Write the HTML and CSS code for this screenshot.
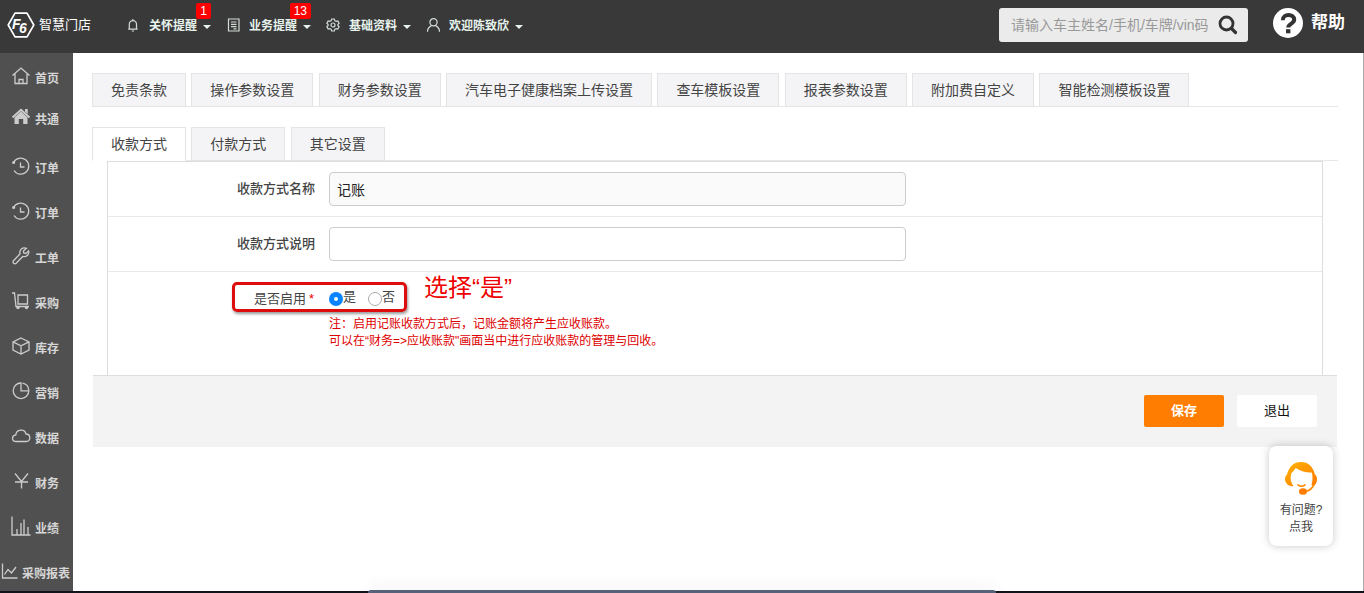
FILE: index.html
```html
<!DOCTYPE html>
<html lang="zh-CN">
<head>
<meta charset="utf-8">
<title>智慧门店</title>
<link rel="stylesheet" href="styles.css">
</head>
<body>
<header class="topbar">
  <a class="brand" href="#">
    <svg class="brand-mark" viewBox="0 0 28 26" aria-hidden="true">
      <path d="M8 1.2h12L26.8 13 20 24.8H8L1.2 13z" fill="none" stroke="#fff" stroke-width="1.7" stroke-linejoin="round"/>
      <text x="5" y="17" class="mark-letter">F</text>
      <text x="12" y="21" class="mark-letter">6</text>
    </svg>
    <span>智慧门店</span>
  </a>
  <nav class="topnav">
    <button class="topitem" type="button">
      <svg viewBox="0 0 14 14"><path d="M3.3 11.2V6.2a3.6 3.6 0 0 1 7.2 0v5M2.2 11.2h9.4M5.8 13h2.2M6.9 2.5V1"/></svg>
      <span>关怀提醒</span><i class="caret"></i><b class="badge">1</b>
    </button>
    <button class="topitem" type="button">
      <svg viewBox="0 0 14 14"><path d="M2.500 1h10.500v12h-10.500zM5 4h5.500M5 6.300h5.500M5 8.600h5.500M7.500 10.800h3"/></svg>
      <span>业务提醒</span><i class="caret"></i><b class="badge">13</b>
    </button>
    <button class="topitem" type="button">
      <svg viewBox="0 0 14 14"><path d="M5.700 1h2.600l.5 1.700 1.300.7 1.700-.4 1.300 2.200L11.900 6.500v1l1.200 1.300-1.300 2.200-1.700-.4-1.300.7-.5 1.700H5.700l-.5-1.700-1.300-.7-1.700.4L.9 8.800l1.200-1.300v-1L.9 5.200 2.200 3l1.700.4 1.300-.7z"/><circle cx="7" cy="7" r="2"/></svg>
      <span>基础资料</span><i class="caret"></i>
    </button>
    <button class="topitem" type="button">
      <svg viewBox="0 0 14 14"><circle cx="7.500" cy="4.300" r="3.600"/><path d="M1.500 13.800c0-3.200 1.700-5.200 4-6.200M13.500 13.800c0-3.200-1.700-5.200-4-6.200"/></svg>
      <span>欢迎陈致欣</span><i class="caret"></i>
    </button>
  </nav>
  <form class="search">
    <input type="text" placeholder="请输入车主姓名/手机/车牌/vin码" aria-label="搜索">
    <button type="button" aria-label="搜索">
      <svg viewBox="0 0 20 20"><circle cx="8.500" cy="8.500" r="6.500" fill="none" stroke="#333" stroke-width="2.800"/><path d="M13.500 13.500l4 4" stroke="#333" stroke-width="3.200" stroke-linecap="round"/></svg>
    </button>
  </form>
  <a class="help" href="#">
    <svg viewBox="0 0 30 30" aria-hidden="true"><circle cx="15" cy="15" r="15" fill="#fff"/><path d="M9.800 12.200c0-7 11.400-6.700 11.400-.6 0 4.400-6 4.100-6 8" fill="none" stroke="#333" stroke-width="4"/><path d="M13 21.200h4.400V25.300H13z" fill="#333"/></svg>
    <span>帮助</span>
  </a>
</header>

<div class="body">
  <nav class="sidebar">
    <a class="side compact" href="#"><svg viewBox="0 0 20 20"><path d="M1.500 9.500L10 2l8.500 7.500M4 8v9.500h12V8M8 17.500v-4h4v4"/></svg><span>首页</span></a>
    <a class="side compact last" href="#"><svg viewBox="0 0 20 20"><path class="solid" d="M10 4.500l6.500 6V17h-4.300v-5H7.800v5H3.500v-6.500z"/><path class="bold" d="M1.500 10.500L10 2.800l8.500 7.700"/><path class="solid" d="M14 2h2.700v5L14 4.700z"/></svg><span>共通</span></a>
    <a class="side" href="#"><svg viewBox="0 0 20 20"><path d="M2.600 6.500A8 8 0 1 1 3 14.500M9.500 6.500V11h4"/><circle class="solid" cx="2.600" cy="6.500" r="1.500"/></svg><span>订单</span></a>
    <a class="side" href="#"><svg viewBox="0 0 20 20"><path d="M2.600 6.500A8 8 0 1 1 3 14.500M9.500 6.500V11h4"/><circle class="solid" cx="2.600" cy="6.500" r="1.500"/></svg><span>订单</span></a>
    <a class="side" href="#"><svg viewBox="0 0 20 20"><path d="M15.500 2.300c-3.800-1.600-7.700 1.400-6.400 5.500L2.500 14.700c-1.300 2 .9 4 2.700 2.600l6.500-6.800c3.900 1 6.900-2.300 5.900-5.600l-2.700 2.600-2.200-.5-.3-2.100z"/></svg><span>工单</span></a>
    <a class="side" href="#"><svg viewBox="0 0 20 20"><path d="M1 2h2.500L5 15.500h13M7 4h9.500v9H7z"/><circle class="solid" cx="7" cy="16.500" r="1.700"/><circle class="solid" cx="15.500" cy="16.500" r="1.700"/></svg><span>采购</span></a>
    <a class="side" href="#"><svg viewBox="0 0 20 20"><path d="M10 2l8 3.800v8.400l-8 3.800-8-3.800V5.800zM2 5.800l8 4 8-4M10 9.800V18"/></svg><span>库存</span></a>
    <a class="side" href="#"><svg viewBox="0 0 20 20"><path d="M10 2a7.800 7.800 0 1 0 7.800 7.800H10zM11.500 2.200a7.800 7.800 0 0 1 6.300 7"/></svg><span>营销</span></a>
    <a class="side" href="#"><svg viewBox="0 0 20 20"><path d="M5 15.500C.5 15.500.3 9.500 4.800 9c.5-6 8.900-6.500 10.200-1 5 0 5 7.500.3 7.500z"/></svg><span>数据</span></a>
    <a class="side" href="#"><svg viewBox="0 0 20 20"><path d="M4 2.500l6.500 8 6.500-8M4 11h13M10.500 10.500V17.500"/></svg><span>财务</span></a>
    <a class="side" href="#"><svg viewBox="0 0 20 20"><path d="M1 .5v18.500h18.500M6 19v-6M10 19V7M13 19V3.500M17 19v-8"/></svg><span>业绩</span></a>
    <a class="side" href="#"><svg class="small" viewBox="0 0 17 20"><path d="M1.500 2.500V17H16.500M3.500 13.500L7 8.500l3.500 3.500L15 6"/></svg><span>采购报表</span></a>
  </nav>

  <main class="main">
    <ul class="tabs">
      <li><a href="#">免责条款</a></li>
      <li><a href="#">操作参数设置</a></li>
      <li><a href="#">财务参数设置</a></li>
      <li><a href="#">汽车电子健康档案上传设置</a></li>
      <li><a href="#">查车模板设置</a></li>
      <li><a href="#">报表参数设置</a></li>
      <li><a href="#">附加费自定义</a></li>
      <li><a href="#">智能检测模板设置</a></li>
    </ul>
    <ul class="tabs">
      <li class="active"><a href="#">收款方式</a></li>
      <li><a href="#">付款方式</a></li>
      <li><a href="#">其它设置</a></li>
    </ul>
    <form class="form">
      <div class="panel">
        <div class="row">
          <label for="name">收款方式名称</label>
          <input class="field" id="name" type="text" value="记账" readonly>
        </div>
        <div class="row">
          <label for="desc">收款方式说明</label>
          <input class="field" id="desc" type="text">
        </div>
        <div class="row tall">
          <span class="rowlabel">是否启用<em>*</em></span>
          <div class="choices">
            <label><input type="radio" name="enabled" checked><span>是</span></label>
            <label><input type="radio" name="enabled"><span>否</span></label>
          </div>
          <p class="note">注：启用记账收款方式后，记账金额将产生应收账款。<br>可以在“财务=&gt;应收账款"画面当中进行应收账款的管理与回收。</p>
          <div class="mark-box"></div>
          <div class="mark-text">选择“是”</div>
        </div>
      </div>
      <div class="actions">
        <button class="btn primary" type="button">保存</button>
        <button class="btn" type="button">退出</button>
      </div>
    </form>
  </main>
</div>

<div class="dock"><div class="dock-bar"></div></div>

<a class="chat" href="#">
  <svg viewBox="0 0 34 34" aria-hidden="true">
    <defs><linearGradient id="g" x1="0" y1="0" x2="1" y2="1"><stop offset="0" stop-color="#ffb400"/><stop offset="1" stop-color="#ff7800"/></linearGradient></defs>
    <path fill="url(#g)" d="M9.500 25C5 26 1 22.500 1 18c0-2 .8-3.500 2-4.500C5 5.500 10 1 17 1s12 4.500 14 12.500c1.200 1 2 2.500 2 4.500 0 4-1.500 6.500-4 7l-1.500-1c1.300-4 1.300-9 .3-12.500-4 .5-11-1-16-4.500C10.500 8.500 9 11 7.500 12 6 16 6.500 21.500 9.500 25z"/>
    <path d="M14 23.800c2 1.600 5 1.600 7 0M30.500 22c-1.500 5-5 8-10 8.500" fill="none" stroke="#ff8a00" stroke-width="1.700" stroke-linecap="round"/>
    <ellipse cx="19" cy="30.500" rx="4" ry="3.200" fill="#ff7d00"/>
  </svg>
  <span>有问题?</span>
  <span>点我</span>
</a>
</body>
</html>
```
FILE: styles.css
```css
* { box-sizing: border-box; }
body {
  margin: 0;
  min-height: 100vh;
  display: flex;
  flex-direction: column;
  position: relative;
  font-family: "Liberation Sans", "Noto Sans CJK SC", sans-serif;
  font-size: 12px;
  line-height: 18px;
  color: #444;
  background: #fff;
}
a { color: inherit; text-decoration: none; }
button, input { font: inherit; color: inherit; }
button { border: 0; background: none; padding: 0; }

.topbar {
  display: flex;
  align-items: center;
  height: 53px;
  padding: 0 19px 4px 7px;
  background: #393939;
  color: #fff;
}
.brand {
  display: flex;
  align-items: center;
  gap: 4px;
  width: 119px;
  font-size: 13px;
}
.brand-mark { width: 28px; height: 26px; fill: #fff; }
.mark-letter { font: italic bold 14px "Liberation Sans", sans-serif; }
.topnav { display: flex; gap: 15px; flex: 1; }
.topitem {
  position: relative;
  display: flex;
  align-items: center;
  gap: 9px;
  color: #e6f2ec;
  font-weight: 700;
}
.topitem span { padding-top: 2px; }
.topitem svg {
  width: 14px;
  height: 14px;
  fill: none;
  stroke: #d3ddd8;
  stroke-width: 1.200;
}
.caret {
  margin: 4px 0 0 -3px;
  border: 4px solid transparent;
  border-top-color: #e6f2ec;
  border-bottom: 0;
}
.badge {
  position: absolute;
  right: 0;
  top: -12px;
  padding: 0 4px;
  border-radius: 2px;
  background: #f00;
  color: #fff;
  font-weight: 400;
  line-height: 16px;
}
.search {
  display: flex;
  align-items: center;
  width: 249px;
  height: 34px;
  padding: 0 10px 0 12px;
  border-radius: 3px;
  background: #ebebeb;
}
.search input {
  flex: 1;
  min-width: 0;
  padding: 0;
  border: 0;
  outline: 0;
  background: none;
  font-size: 14px;
}
.search input::placeholder { color: #999; }
.search svg { display: block; width: 20px; height: 20px; }
.help {
  display: flex;
  align-items: center;
  gap: 8px;
  margin-left: 25px;
  padding-bottom: 3px;
  font-size: 17px;
  font-weight: 700;
}
.help svg { width: 30px; height: 30px; }

.body { display: flex; flex: 1; border-right: 1px solid #aaa; }
.sidebar {
  flex: none;
  width: 73px;
  padding-top: 4px;
  background: #505050;
  color: #d6d6d6;
  font-weight: 700;
}
.side {
  display: flex;
  align-items: center;
  gap: 4px;
  height: 45px;
  padding-left: 11px;
  white-space: nowrap;
}
.side span { padding-top: 2px; }
.side.compact { height: 41px; }
.side.last { margin-bottom: 6px; }
.side svg {
  flex: none;
  width: 20px;
  height: 20px;
  margin-bottom: 4px;
  fill: none;
  stroke: #ccc;
  stroke-width: 1.300;
}
.side .solid { fill: #ccc; stroke: none; }
.side .bold { stroke-width: 2; }
.side svg.small { width: 17px; margin-left: -10px; }
.side:last-child { height: 41px; padding-top: 4px; }

.main { flex: 1; min-width: 0; padding: 20px 25px 0 19px; }
.tabs {
  margin: 0 0 20px;
  padding: 0;
  list-style: none;
  border-bottom: 1px solid #e7e7e7;
}
.tabs li {
  display: inline-block;
  vertical-align: top;
  margin: 0 2px -1px 0;
  border: 1px solid #e4e4e4;
  background: #f4f4f7;
  font-size: 14px;
  line-height: 32px;
}
.tabs a { display: block; padding: 0 18px; }
.tabs .active { background: #fff; border-bottom-color: #fff; }
.tabs + .tabs { margin-bottom: 0; }

.panel { margin: 0 15px; border: 1px solid #ddd; border-bottom: 0; }
.row {
  position: relative;
  display: grid;
  grid-template-columns: 207px minmax(0, 577px);
  column-gap: 14px;
  padding: 10px 0;
  border-bottom: 1px solid #e9e9e9;
}
.row > label { text-align: right; font-size: 13px; font-weight: 500; line-height: 34px; }
.field {
  width: 100%;
  height: 34px;
  padding: 0 7px;
  border: 1px solid #ccc;
  border-radius: 4px;
  background: #fff;
  color: #222;
  font-size: 14px;
}
.field:read-only { background: #fafafa; }
.row.tall { padding: 16px 0 25px; border-bottom: 0; }
.rowlabel { text-align: right; font-size: 13px; line-height: 22px; }
.rowlabel em { margin: 0 1px 0 3px; color: #e00; font-style: normal; }
.choices { display: flex; gap: 12px; font-size: 13px; }
.choices label { display: flex; align-items: flex-start; }
.choices input {
  appearance: none;
  width: 14px;
  height: 14px;
  margin: 4px 0 0;
  border: 1px solid #aaa;
  border-radius: 50%;
  background: #fff;
}
.choices input:checked { border: 5px solid #0a84ff; }
.note { grid-column: 2; margin: 6px 0 0; color: #d00; line-height: 17px; white-space: nowrap; }
.mark-box {
  position: absolute;
  left: 124px;
  top: 10px;
  width: 175px;
  height: 30px;
  border: 3px solid #dd0d0d;
  border-radius: 5px;
  box-shadow: 1px 2px 3px rgba(0, 0, 0, .4);
  pointer-events: none;
}
.mark-text {
  position: absolute;
  left: 316px;
  top: 0;
  color: #e00;
  font-size: 24px;
  line-height: 32px;
}

.actions {
  display: flex;
  justify-content: flex-end;
  gap: 13px;
  margin: 0 1px;
  padding: 19px 20px 20px;
  border-top: 1px solid #ddd;
  background: #f3f3f3;
}
.btn {
  width: 80px;
  height: 32px;
  border-radius: 2px;
  background: #fff;
  color: #111;
  font-size: 13px;
}
.btn.primary { background: #ff7d00; color: #fff; font-weight: 700; }

.chat {
  position: absolute;
  right: 31px;
  bottom: 47px;
  display: flex;
  flex-direction: column;
  align-items: center;
  width: 64px;
  padding: 15px 0 10px;
  border-radius: 8px;
  background: #fff;
  box-shadow: 0 0 8px rgba(0, 0, 0, .22);
  line-height: 17px;
}
.chat svg { width: 34px; height: 34px; margin-bottom: 7px; }

.dock {
  display: flex;
  justify-content: center;
  align-items: flex-end;
  height: 2px;
  background: #10131a;
}
.dock-bar {
  flex: none;
  width: 46%;
  height: 3px;
  border-radius: 3px 3px 0 0;
  background: #56627a;
  box-shadow: 0 -2px 16px rgba(0, 0, 0, .14);
}
```
